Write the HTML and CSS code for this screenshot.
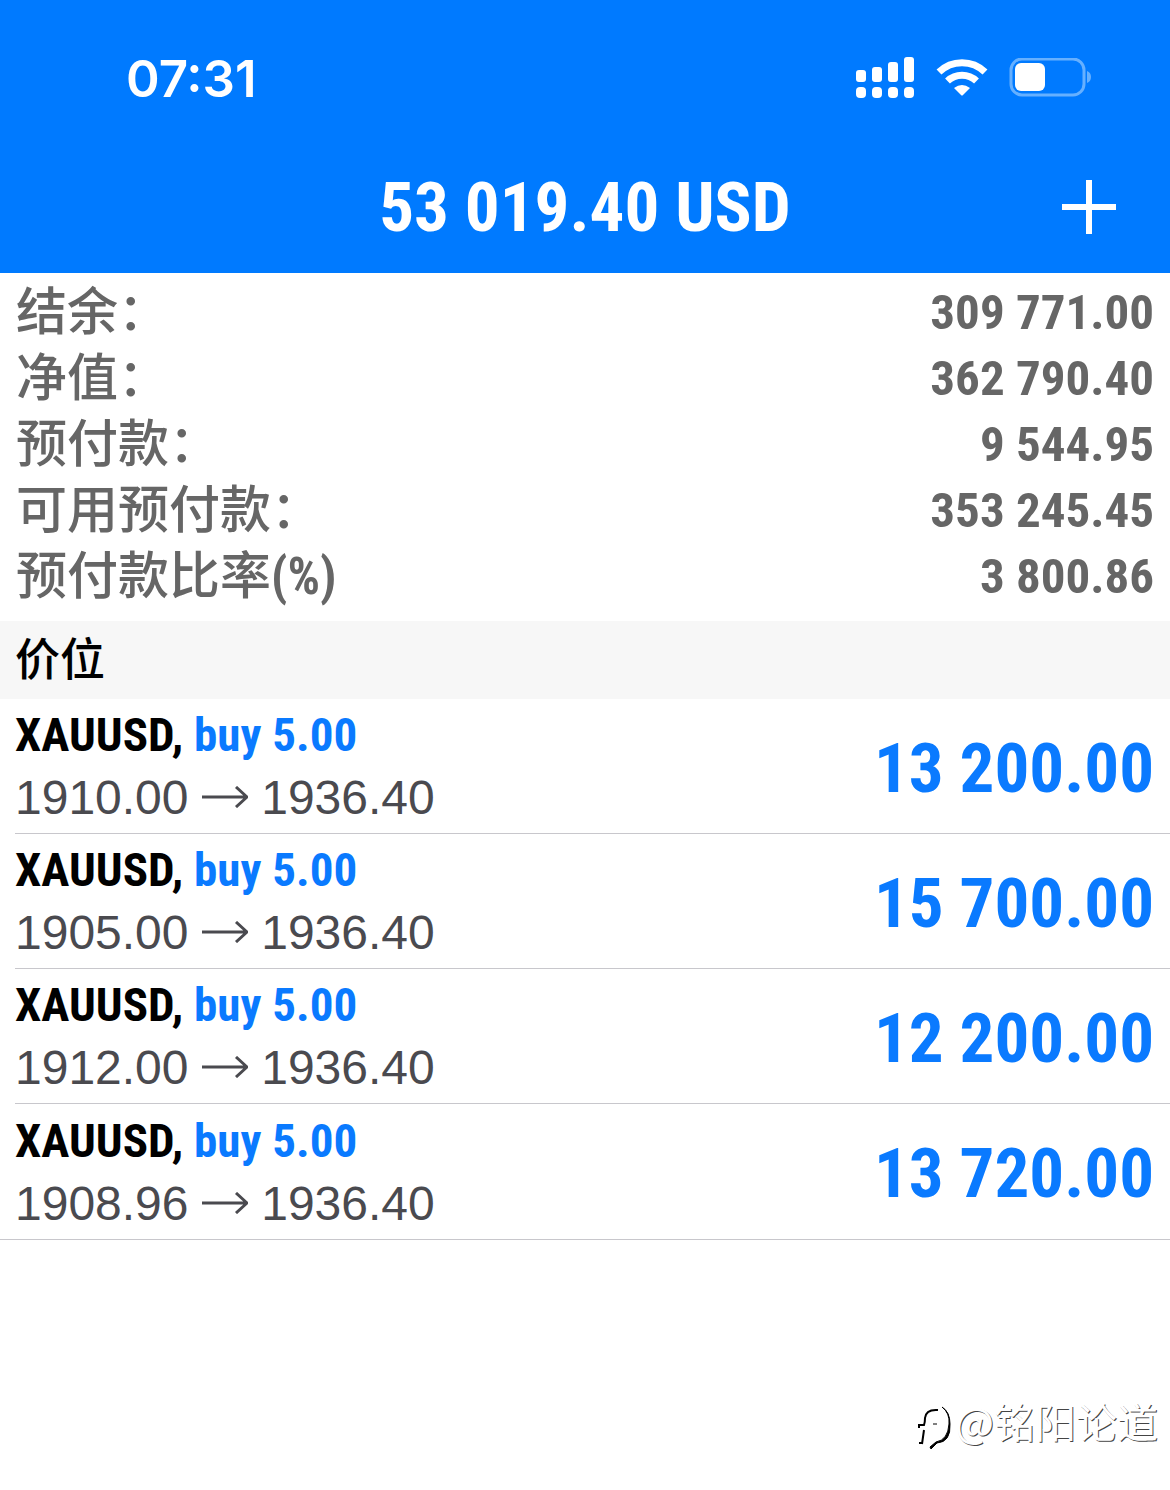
FILE: index.html
```html
<!DOCTYPE html>
<html lang="zh-CN">
<head>
    <meta charset="UTF-8">
    <meta name="viewport" content="width=device-width, initial-scale=1.0">
    <title>53 019.40 USD</title>
    <link rel="stylesheet" href="styles.css">
</head>
<body>
    <header class="header">
        <div class="status-bar">
            <time class="clock">07:31</time>
            <div class="status-icons">
                <svg class="icon-signal" width="60" height="42" viewBox="0 0 60 42" fill="#fff" aria-hidden="true">
                    <rect x="0" y="13" width="10" height="12" rx="3"/>
                    <rect x="16" y="10" width="10" height="15" rx="3"/>
                    <rect x="32" y="5" width="10" height="20" rx="3"/>
                    <rect x="48" y="0" width="10" height="25" rx="3"/>
                    <rect x="0" y="30" width="10" height="11" rx="4"/>
                    <rect x="16" y="30" width="10" height="11" rx="4"/>
                    <rect x="32" y="30" width="10" height="11" rx="4"/>
                    <rect x="48" y="30" width="10" height="11" rx="4"/>
                </svg>
                <svg class="icon-wifi" width="52" height="38" viewBox="0 0 52 38" fill="none" stroke="#fff" aria-hidden="true">
                    <path d="M3 13A33 33 0 0 1 49 13" stroke-width="7"/>
                    <path d="M11.500 22A21 21 0 0 1 40.500 22" stroke-width="7"/>
                    <path d="M18 29Q26 23 34 29L27 36Q26 37 25 36Z" fill="#fff" stroke="none"/>
                </svg>
                <svg class="icon-battery" width="84" height="40" viewBox="0 0 84 40" aria-hidden="true">
                    <rect x="3" y="1" width="73" height="36" rx="11" fill="none" stroke="#66b0ff" stroke-width="3"/>
                    <rect x="7" y="5" width="30" height="28" rx="6" fill="#fff"/>
                    <path d="M79 13Q83 14.500 83 19Q83 23.500 79 25Z" fill="#66b0ff"/>
                </svg>
            </div>
        </div>
        <div class="nav-bar">
            <h1 class="profit-total">53 019.40 USD</h1>
            <button class="add-button" type="button" aria-label="+">
                <svg width="54" height="54" viewBox="0 0 54 54" stroke="#fff" stroke-width="6" aria-hidden="true">
                    <path d="M0 27H54M27 0V54"/>
                </svg>
            </button>
        </div>
    </header>

    <main>
        <dl class="account">
            <div class="account-row"><dt>结余：</dt><dd>309 771.00</dd></div>
            <div class="account-row"><dt>净值：</dt><dd>362 790.40</dd></div>
            <div class="account-row"><dt>预付款：</dt><dd>9 544.95</dd></div>
            <div class="account-row"><dt>可用预付款：</dt><dd>353 245.45</dd></div>
            <div class="account-row"><dt>预付款比率<span class="unit">(%)</span></dt><dd>3 800.86</dd></div>
        </dl>

        <h2 class="section-title">价位</h2>

        <ul class="positions">
            <li class="position">
                <div>
                    <div class="symbol">XAUUSD, <span class="side">buy 5.00</span></div>
                    <div class="prices">1910.00 <svg class="arrow" viewBox="0 0 46 22" aria-hidden="true"><path d="M0 11H44M34 1L45 11L34 21"/></svg> 1936.40</div>
                </div>
                <div class="profit">13 200.00</div>
            </li>
            <li class="position">
                <div>
                    <div class="symbol">XAUUSD, <span class="side">buy 5.00</span></div>
                    <div class="prices">1905.00 <svg class="arrow" viewBox="0 0 46 22" aria-hidden="true"><path d="M0 11H44M34 1L45 11L34 21"/></svg> 1936.40</div>
                </div>
                <div class="profit">15 700.00</div>
            </li>
            <li class="position">
                <div>
                    <div class="symbol">XAUUSD, <span class="side">buy 5.00</span></div>
                    <div class="prices">1912.00 <svg class="arrow" viewBox="0 0 46 22" aria-hidden="true"><path d="M0 11H44M34 1L45 11L34 21"/></svg> 1936.40</div>
                </div>
                <div class="profit">12 200.00</div>
            </li>
            <li class="position">
                <div>
                    <div class="symbol">XAUUSD, <span class="side">buy 5.00</span></div>
                    <div class="prices">1908.96 <svg class="arrow" viewBox="0 0 46 22" aria-hidden="true"><path d="M0 11H44M34 1L45 11L34 21"/></svg> 1936.40</div>
                </div>
                <div class="profit">13 720.00</div>
            </li>
        </ul>
    </main>

    <footer class="watermark">
        <svg width="34" height="46" viewBox="0 0 34 46" fill="none" stroke="#000" aria-hidden="true">
            <path d="M21 6Q9 5 8 14Q8 18 7 21H2V24" stroke-width="2"/>
            <path d="M7 26L5 40M2 39H5" stroke-width="2"/>
            <path d="M16 20H20" stroke-width="1"/>
            <path d="M25 3Q33 9 32 20Q31 36 19 38L13 43L14 45L20 39Q34 38 33 20Q33 8 25 3Z" fill="#000" stroke-width="1"/>
        </svg>
        <span>@铭阳论道</span>
    </footer>
</body>
</html>
```
FILE: styles.css
```css
* {
    box-sizing: border-box;
}
body {
    margin: 0;
    min-height: 100vh;
    display: flex;
    flex-direction: column;
    background: #fff;
    font-family: "Liberation Sans", "Noto Sans CJK SC", sans-serif;
}
h1, h2, dl, dd, ul {
    margin: 0;
    padding: 0;
}

/* header */
.header {
    background: #007aff;
    color: #fff;
}
.status-bar {
    display: flex;
    align-items: center;
    justify-content: space-between;
    height: 140px;
    padding: 16px 78px 0 126px;
}
.clock {
    font-family: Inter, sans-serif;
    font-size: 51px;
    font-weight: 600;
}
.status-icons {
    display: flex;
    align-items: center;
    gap: 20px;
}
.nav-bar {
    display: grid;
    grid-template-columns: 1fr auto 1fr;
    align-items: center;
    height: 133px;
    padding: 0 54px;
}
.profit-total, .account-row dd, .unit, .symbol, .profit {
    font-family: "Roboto Condensed", Roboto, "Liberation Sans", sans-serif;
    font-weight: bold;
}
.profit-total {
    grid-column: 2;
    padding-top: 2px;
    font-size: 69px;
}
.add-button {
    justify-self: end;
    display: flex;
    padding: 0;
    border: none;
    background: none;
    cursor: pointer;
}

/* account summary */
.account {
    padding: 2px 16px 16px;
    color: #666;
}
.account-row {
    display: flex;
    justify-content: space-between;
    height: 66px;
    line-height: 66px;
}
.account-row dt {
    font-family: "Noto Sans CJK SC", sans-serif;
    font-size: 51px;
    font-weight: 500;
}
.account-row dd {
    padding-top: 5px;
    font-size: 49px;
}
.unit {
    line-height: 1;
}

.section-title {
    padding: 2px 15px 0;
    background: #f7f7f7;
    color: #000;
    font-size: 45px;
    font-weight: 500;
    line-height: 76px;
}

/* open positions */
.positions {
    list-style: none;
    border-bottom: 1px solid #c8c7cc;
}
.position {
    display: flex;
    align-items: center;
    justify-content: space-between;
    height: 135px;
    margin-left: 15px;
    padding-right: 16px;
    border-bottom: 1px solid #c8c7cc;
}
.position:last-child {
    border-bottom: none;
}
.symbol {
    color: #000;
    font-size: 47px;
    line-height: 63px;
}
.side, .profit {
    color: #0a7aff;
}
.prices {
    color: #4a4a4f;
    font-size: 48px;
    line-height: 63px;
}
.arrow {
    width: 46px;
    height: 22px;
    vertical-align: 6px;
    fill: none;
    stroke: #4a4a4f;
    stroke-width: 3;
}
.profit {
    padding-top: 4px;
    font-size: 69px;
}

.watermark {
    display: flex;
    align-items: flex-end;
    justify-content: flex-end;
    gap: 4px;
    margin-top: auto;
    padding: 0 12px 40px;
    color: #fff;
    font-family: "Noto Sans CJK SC", sans-serif;
    font-size: 41px;
    line-height: 60px;
    text-shadow: 1px 1px 0 #444;
}
```
